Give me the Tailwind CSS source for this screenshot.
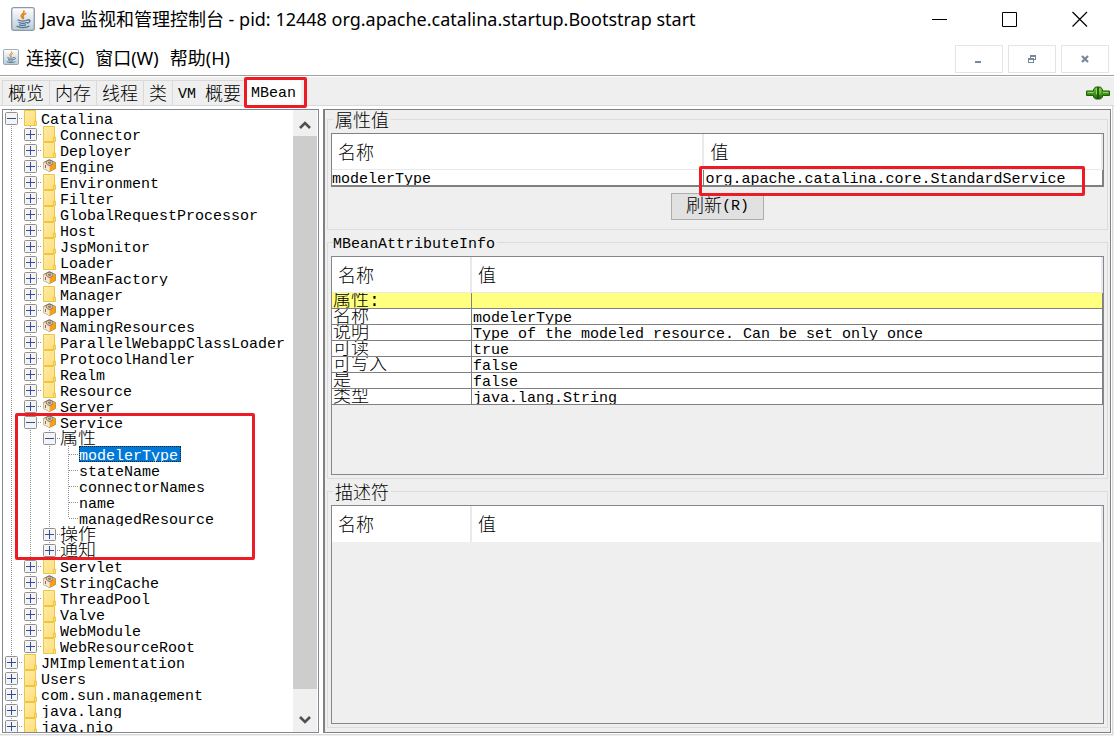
<!DOCTYPE html>
<html lang="zh-CN">
<head>
<meta charset="utf-8">
<title>Java 监视和管理控制台</title>
<script src="https://cdn.jsdelivr.net/npm/@tailwindcss/browser@4"></script>
</head>
<body class="h-screen overflow-hidden bg-white text-black">

<svg class="absolute size-0" aria-hidden="true">
  <defs>
    <linearGradient id="cupBg" x1="0" y1="0" x2="0" y2="1"><stop offset="0" stop-color="#ffffff"/><stop offset="1" stop-color="#b9cbd9"/></linearGradient>
    <linearGradient id="plugFill" x1="0" y1="0" x2="0" y2="1"><stop offset="0" stop-color="#6cc52a"/><stop offset="1" stop-color="#1f6a10"/></linearGradient>
    <linearGradient id="folderFill" x1="0" y1="0" x2="1" y2="1"><stop offset="0" stop-color="#ffeca6"/><stop offset="1" stop-color="#ffdc78"/></linearGradient>
  </defs>
  <symbol id="java" viewBox="0 0 24 24">
    <rect x=".7" y=".7" width="22.6" height="22.6" rx="2" fill="url(#cupBg)" stroke="#8d9aa6" stroke-width="1.3"/>
    <path d="M12.800 4c1.600 2-3.600 3.300-2.600 5.400.4.9 1.300 1.200 1.500 1.900M14.800 6.500c-2 .9-3.200 1.700-2.800 2.900.3.900 1.200 1.300.2 2.400" fill="none" stroke="#e8811a" stroke-width="1.500" stroke-linecap="round"/>
    <path d="M7 13c2.500 1.100 7 1.100 9.500 0M8 15.500c2 .9 5.500.9 7.500 0M8.500 17.800c2 .7 4.500.7 6 0M6 19.300c2.500 1.700 9.500 1.700 12 0M17 13c2.800-.6 2.600 2.400-.4 3" fill="none" stroke="#4f7391" stroke-width="1.300" stroke-linecap="round"/>
  </symbol>
  <symbol id="folder" viewBox="0 0 13 16">
    <path d="M.5.5h11v11h1v4H.500z" fill="url(#folderFill)" stroke="#ecc743"/>
    <path d="M10.500 15v-4h2" fill="none" stroke="#ecc743"/>
  </symbol>
  <symbol id="bean" viewBox="0 0 13 13">
    <path d="M.5 3.500 6.500.5l6 3v6l-6 3-6-3z" fill="#e9c48c" stroke="#8a7558" stroke-width=".8"/>
    <path d="M6.500 6v6.500l6-3v-6z" fill="#f59f16"/>
    <path d="M.5 3.500 6.500 6v6.500l-6-3z" fill="#f7e6cb"/>
    <path d="M3.500 2.500c1-1.500 5-1.500 6 0s-1 4-3 4-4-2.500-3-4z" fill="#d8cdbc" stroke="#6f5c46" stroke-width=".8"/>
    <path d="M5 3.500l3-.5M5.500 5l2.500-1M2.500 6v3" stroke="#6b5236" stroke-width=".8"/>
  </symbol>
</svg>

<div class="relative flex h-full flex-col">
  <header class="font-['Noto_Sans','Noto_Sans_CJK_SC',sans-serif] text-[18px] leading-6">
    <div class="flex h-[38px] items-center pl-[11px]">
      <svg class="size-6"><use href="#java"/></svg>
      <h1 class="ml-[6px] flex-1 whitespace-nowrap">Java 监视和管理控制台 - pid: 12448 org.apache.catalina.startup.Bootstrap start</h1>
      <div class="flex gap-[22px] pr-[10px]">
        <button aria-label="最小化" class="flex w-12 justify-center"><svg class="size-4" viewBox="0 0 16 16"><path d="M0 8.500h15" stroke="#000"/></svg></button>
        <button aria-label="最大化" class="flex w-12 justify-center"><svg class="size-4" viewBox="0 0 16 16"><path d="M.5 1.500h14v14H.500z" fill="none" stroke="#000"/></svg></button>
        <button aria-label="关闭" class="flex w-12 justify-center"><svg class="size-4" viewBox="0 0 16 16"><path d="M.5 1l14.500 14.500M15 1 .5 15.500" fill="none" stroke="#000" stroke-width="1.200"/></svg></button>
      </div>
    </div>
    <div class="flex h-[37px] items-center pl-[3px]">
      <svg class="size-4"><use href="#java"/></svg>
      <nav class="ml-[7px] flex flex-1 gap-[11px] pt-[2px]">
        <button>连接(C)</button><button>窗口(W)</button><button>帮助(H)</button>
      </nav>
      <div class="flex gap-[5px] self-end pr-[5px] pb-[2px]">
        <button aria-label="最小化框架" class="flex h-7 w-12 items-center justify-center border border-[#e4e4e4]"><svg class="size-2" viewBox="0 0 8 8"><path d="M0 6h6v2H0z" fill="#778899"/></svg></button>
        <button aria-label="还原框架" class="flex h-7 w-12 items-center justify-center border border-[#e4e4e4]"><svg class="size-2" viewBox="0 0 8 8"><path d="M2 0h6v5H6V4h1V2H3v1H2zM0 3h6v5H0zM1 5v2h4V5z" fill="#778899" fill-rule="evenodd"/></svg></button>
        <button aria-label="关闭框架" class="flex h-7 w-12 items-center justify-center border border-[#e4e4e4]"><svg class="size-2" viewBox="0 0 8 8"><path d="M1 1l6 6M7 1 1 7" stroke="#778899" stroke-width="2.200"/></svg></button>
      </div>
    </div>
  </header>

  <main class="flex min-h-0 flex-1 flex-col border-t border-[#a0a0a0] bg-[#efefef] pb-px font-['Liberation_Mono','Noto_Sans_CJK_SC',monospace] text-[15px]">
    <div class="flex h-[30px] items-end border-t border-white border-b border-b-[#d9d9d9] pl-[2px]">
      <div class="flex h-[25px] flex-1 border-l border-[#d9d9d9] leading-7">
        <button class="flex border-t border-r border-[#d9d9d9] px-[5px] text-[18px] font-light">概览</button>
        <button class="flex border-t border-r border-[#d9d9d9] px-[5px] text-[18px] font-light">内存</button>
        <button class="flex border-t border-r border-[#d9d9d9] px-[5px] text-[18px] font-light">线程</button>
        <button class="flex border-t border-r border-[#d9d9d9] px-[5px] text-[18px] font-light">类</button>
        <button class="flex border-t border-[#d9d9d9] px-[5px] whitespace-pre">VM <span class="text-[18px] font-light">概要</span></button>
        <button class="relative flex bg-white px-[5px]">MBean<span class="absolute -top-[3px] -right-[6px] -bottom-[3px] -left-[2px] z-10 rounded-xs border-3 border-[#ed1c24]"></span></button>
      </div>
      <svg class="mr-1 mb-[5px] h-[14px] w-6" viewBox="0 0 24 14" role="img" aria-label="已连接">
        <path d="M.5 5h7V3.500L9.500 1h5l2 2.500V5h7v4.500h-7V11l-2 2h-5l-2-2V9.500h-7z" fill="url(#plugFill)" stroke="#1d5c12"/>
        <path d="M12 1v12" stroke="#164a0d" stroke-width="1.500"/><path d="M10.500 2.500v6M14 2.500v6M1.500 6.500h6M17 6.500h5.500" stroke="#8fdc50"/>
      </svg>
    </div>

    <div class="mr-px flex min-h-0 flex-1 border-r border-b border-[#d9d9d9] bg-white pt-[3px] pb-px pl-[2px]">
      <section class="relative flex w-[317px] shrink-0 border border-[#828790] bg-white" aria-label="MBean 树">
        <ul id="tree" class="min-w-0 flex-1 overflow-hidden"></ul>
        <div class="mr-px flex w-6 flex-col bg-[#f0f0f0]">
          <button aria-label="向上滚动" class="flex h-[26px] items-center justify-center pt-1"><svg class="h-[9px] w-3" viewBox="0 0 12 9"><path d="M1 7l5-5 5 5" fill="none" stroke="#505050" stroke-width="2.600"/></svg></button>
          <div class="flex-1 bg-[#cdcdcd]"></div>
          <button aria-label="向下滚动" class="flex h-[43px] items-center justify-center pt-[18px]"><svg class="h-[9px] w-3" viewBox="0 0 12 9"><path d="M1 2l5 5 5-5" fill="none" stroke="#505050" stroke-width="2.600"/></svg></button>
        </div>
        <span class="pointer-events-none absolute top-[303px] left-[12px] h-[147px] w-60 rounded-xs border-3 border-[#ed1c24]"></span>
      </section>

      <section class="mr-px ml-1 flex min-w-0 flex-1 flex-col gap-[3px] border border-l-2 border-[#808080] bg-[#efefef] pr-[2px] pb-1 pl-[2px]">
        <fieldset class="min-w-0 border border-[#dcdcdc] px-[3px] pt-[5px] pb-[9px]">
          <legend class="ml-[2px] h-[18px] px-[2px] text-[18px] leading-6 font-light">属性值</legend>
          <table class="w-full table-fixed border-separate border-spacing-0 border border-b-2 border-[#808080] bg-white">
            <thead><tr class="h-9 text-left text-[18px]">
              <th class="w-[48.3%] border-r-2 border-b border-[#e9e9e9] px-[6px] pt-1 pb-0 leading-[30px] font-light">名称</th>
              <th class="border-r-2 border-b border-[#e9e9e9] px-[6px] pt-1 pb-0 leading-[30px] font-light">值</th>
            </tr></thead>
            <tbody><tr>
              <td class="border-r border-[#808080] p-0"><div class="h-[15px] overflow-hidden leading-5">modelerType</div></td>
              <td class="relative border-r border-[#808080] p-0"><div class="h-[15px] overflow-hidden pl-px leading-5">org.apache.catalina.core.StandardService</div><span class="absolute -top-[4px] right-[17px] -bottom-[11px] -left-[5px] rounded-xs border-3 border-[#ed1c24]"></span></td>
            </tr></tbody>
          </table>
          <button class="mx-auto mt-[6px] flex h-[27px] w-[93px] items-center justify-center border border-[#adadad] bg-[#e1e1e1] pt-[2px]"><span class="text-[18px] font-light">刷新</span>(R)</button>
        </fieldset>

        <fieldset class="flex min-h-0 min-w-0 flex-1 flex-col border border-[#dcdcdc] px-[3px] pt-[5px] pb-[3px]">
          <legend class="ml-[2px] h-[18px] pr-[2px] leading-6">MBeanAttributeInfo</legend>
          <div class="min-h-0 flex-1 overflow-hidden border border-[#828790]">
            <table class="w-full table-fixed border-separate border-spacing-0 bg-white">
              <thead><tr class="h-9 text-left text-[18px]">
                <th class="w-[140px] border-r-2 border-b border-[#e9e9e9] px-[6px] pt-1 pb-0 leading-[30px] font-light">名称</th>
                <th class="border-r-2 border-b border-[#e9e9e9] px-[6px] pt-1 pb-0 leading-[30px] font-light">值</th>
              </tr></thead>
              <tbody id="info"></tbody>
            </table>
          </div>
        </fieldset>

        <fieldset class="flex min-h-0 min-w-0 flex-1 flex-col border border-[#dcdcdc] px-[3px] pt-[5px] pb-[3px]">
          <legend class="ml-[2px] h-[18px] px-[2px] text-[18px] leading-6 font-light">描述符</legend>
          <div class="min-h-0 flex-1 overflow-hidden border border-[#828790]">
            <table class="w-full table-fixed border-separate border-spacing-0 bg-white">
              <thead><tr class="h-9 text-left text-[18px]">
                <th class="w-[140px] border-r-2 border-[#e9e9e9] px-[6px] pt-1 pb-0 leading-[30px] font-light">名称</th>
                <th class="border-r-2 border-[#e9e9e9] px-[6px] pt-1 pb-0 leading-[30px] font-light">值</th>
              </tr></thead>
            </table>
          </div>
        </fieldset>
      </section>
    </div>
  </main>
</div>

<script>
// Guide-line cell kinds: full and half height vertical dots, and leaf elbows.
const V = 'bg-[repeating-linear-gradient(to_bottom,#909090_0_1px,transparent_1px_2px)]';
const H = 'bg-[repeating-linear-gradient(to_right,#909090_0_1px,transparent_1px_2px)]';
const guide = () => `<span class="w-[19px] shrink-0 pl-2"><span class="block h-4 w-px ${V}"></span></span>`;
const elbow = half => `<span class="flex w-[19px] shrink-0 pl-2"><span class="w-px ${half ? 'h-2' : 'h-4'} ${V}"></span><span class="mt-2 h-px flex-1 ${H}"></span></span>`;
const box = open => `<button aria-label="${open ? '折叠' : '展开'}" class="flex w-[19px] shrink-0 items-center pl-[2px]"><svg class="h-4 w-[17px]" viewBox="0 0 17 16"><path d="M6.500 0V16" stroke="#909090" stroke-dasharray="1 1"/><rect x=".5" y="2.500" width="12" height="12" rx="1" fill="#f4f4f4" stroke="#919191"/><path d="M2 8.500h9${open ? '' : 'M6.500 4v9'}" stroke="#2f4d9b"/><path d="M14 8.500h3" stroke="#909090" stroke-dasharray="1 1"/></svg></button>`;
const icons = {
  f: '<svg class="mr-1 ml-[2px] h-4 w-[13px] shrink-0"><use href="#folder"/></svg>',
  b: '<svg class="mt-px mr-1 ml-[2px] size-[13px] shrink-0"><use href="#bean"/></svg>'
};
// depth, kind (f folder, b bean, g group, l leaf), label, open, last sibling
const rows = [[0,'f','Catalina',1]];
const add = s => s.split(' ').forEach(n => rows.push([1, n[0] === '*' ? 'b' : 'f', n.replace('*', ''), 0]));
add('Connector Deployer *Engine Environment Filter GlobalRequestProcessor Host JspMonitor Loader *MBeanFactory Manager *Mapper *NamingResources ParallelWebappClassLoader ProtocolHandler Realm Resource *Server');
rows.push([1,'b','Service',1],[2,'g','属性',1],[3,'l','modelerType'],[3,'l','stateName'],[3,'l','connectorNames'],[3,'l','name'],[3,'l','managedResource',0,1],[2,'g','操作',0],[2,'g','通知',0]);
add('Servlet *StringCache ThreadPool Valve WebModule WebResourceRoot');
['JMImplementation','Users','com.sun.management','java.lang','java.nio'].forEach(n => rows.push([0,'f',n,0]));
document.getElementById('tree').innerHTML = rows.map(([d, k, name, open, last]) => {
  const text = k === 'g' ? 'overflow-hidden text-[18px] leading-[18px] font-light'
    : name === 'modelerType' ? 'overflow-hidden bg-[#0078d7] text-white leading-[22px] pr-[3px] outline outline-dotted outline-1 -outline-offset-1 outline-[#20201a]'
    : 'overflow-hidden leading-[22px]';
  return `<li class="flex h-4">${guide().repeat(d)}${k === 'l' ? elbow(last) : box(open)}${icons[k] || ''}<span class="${text}">${name}</span></li>`;
}).join('');

const info = [['属性:',''],['名称','modelerType'],['说明','Type of the modeled resource. Can be set only once'],['可读','true'],['可写入','false'],['是','false'],['类型','java.lang.String']];
document.getElementById('info').innerHTML = info.map(([a, b], i) =>
  `<tr class="${i ? 'bg-white' : 'bg-[#ffff80]'}"><td class="border-r border-b border-[#808080] p-0"><div class="h-[15px] overflow-hidden pl-px text-[18px] leading-[17px] font-light">${a}</div></td><td class="border-r border-b border-[#808080] p-0"><div class="h-[15px] overflow-hidden pl-px leading-5">${b}</div></td></tr>`).join('');
</script>
</body>
</html>
